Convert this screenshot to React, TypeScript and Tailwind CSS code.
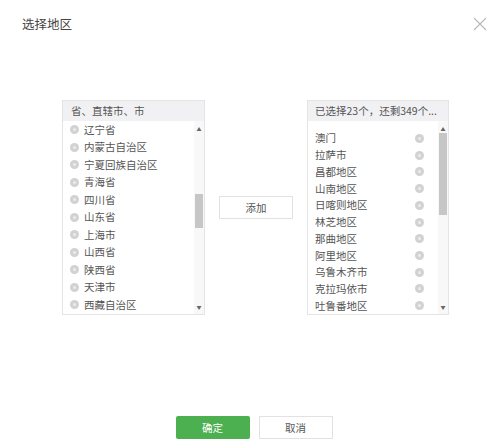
const provinces = [
  "辽宁省",
  "内蒙古自治区",
  "宁夏回族自治区",
  "青海省",
  "四川省",
  "山东省",
  "上海市",
  "山西省",
  "陕西省",
  "天津市",
  "西藏自治区",
];

const selected = [
  "澳门",
  "拉萨市",
  "昌都地区",
  "山南地区",
  "日喀则地区",
  "林芝地区",
  "那曲地区",
  "阿里地区",
  "乌鲁木齐市",
  "克拉玛依市",
  "吐鲁番地区",
];

function Dot() {
  return (
    <span className="flex h-[9px] w-[9px] shrink-0 items-center justify-center rounded-full bg-[#d2d2d2]">
      <span className="h-[3px] w-[3px] rounded-full bg-[#ececec]" />
    </span>
  );
}

function ScrollBar({ thumbTop, thumbHeight }: { thumbTop: number; thumbHeight: number }) {
  return (
    <div className="relative flex w-[10px] shrink-0 flex-col items-center bg-[#f8f8f8]">
      <span className="mt-[4px] text-[5px] leading-[8px] text-[#666]">▲</span>
      <div
        className="absolute left-[1px] w-[8px] bg-[#c6c6c6]"
        style={{ top: thumbTop, height: thumbHeight }}
      />
      <span className="mt-auto mb-[3px] text-[5px] leading-[8px] text-[#666]">▼</span>
    </div>
  );
}

export default function App() {
  return (
    <div
      className="flex h-[441px] w-[500px] flex-col bg-white text-[#555]"
      style={{ fontFamily: '"Noto Sans CJK SC", "Noto Sans", sans-serif' }}
    >
      <div className="flex items-start justify-between pl-[22px] pr-[13px] pt-[15px]">
        <span className="text-[12.5px] leading-[18px] text-[#444]">选择地区</span>
        <svg width="14" height="14" viewBox="0 0 14 14" className="mt-[2px]">
          <path d="M1 1L13 13M13 1L1 13" stroke="#b8b8b8" strokeWidth="1.1" />
        </svg>
      </div>

      <div className="mt-[67px] flex items-center pl-[62px]">
        {/* left box */}
        <div className="flex h-[215px] w-[143px] flex-col border border-[#e4e4e4]">
          <div className="flex h-[20px] items-center bg-[#f1f1f4] pl-[8px] text-[10.5px] text-[#555]">
            省、直辖市、市
          </div>
          <div className="flex min-h-0 flex-1">
            <div className="flex flex-1 flex-col">
              {provinces.map((p) => (
                <div key={p} className="flex h-[17.5px] items-center gap-[5px] pl-[7px] text-[10.5px]">
                  <Dot />
                  <span>{p}</span>
                </div>
              ))}
            </div>
            <ScrollBar thumbTop={73} thumbHeight={34} />
          </div>
        </div>

        <div className="flex w-[102px] justify-center">
          <button className="h-[23px] w-[74px] border border-[#e2e2e2] bg-white text-[10.5px] text-[#555]">
            添加
          </button>
        </div>

        {/* right box */}
        <div className="flex h-[215px] w-[142px] flex-col border border-[#e4e4e4]">
          <div className="flex h-[20px] items-center bg-[#f1f1f4] pl-[7px] text-[10.5px] text-[#555]">
            已选择23个，还剩349个...
          </div>
          <div className="flex min-h-0 flex-1">
            <div className="flex flex-1 flex-col pt-[9px]">
              {selected.map((s) => (
                <div key={s} className="flex h-[16.9px] items-center justify-between pl-[7px] pr-[14px] text-[10.5px]">
                  <span>{s}</span>
                  <Dot />
                </div>
              ))}
            </div>
            <ScrollBar thumbTop={12} thumbHeight={82} />
          </div>
        </div>
      </div>

      <div className="mt-auto mb-[2px] flex justify-center gap-[9px] pl-[8px]">
        <button className="h-[23px] w-[74px] rounded-[2px] bg-[#4caf50] text-[10.5px] text-white">
          确定
        </button>
        <button className="h-[23px] w-[74px] border border-[#e2e2e2] bg-white text-[10.5px] text-[#555]">
          取消
        </button>
      </div>
    </div>
  );
}
